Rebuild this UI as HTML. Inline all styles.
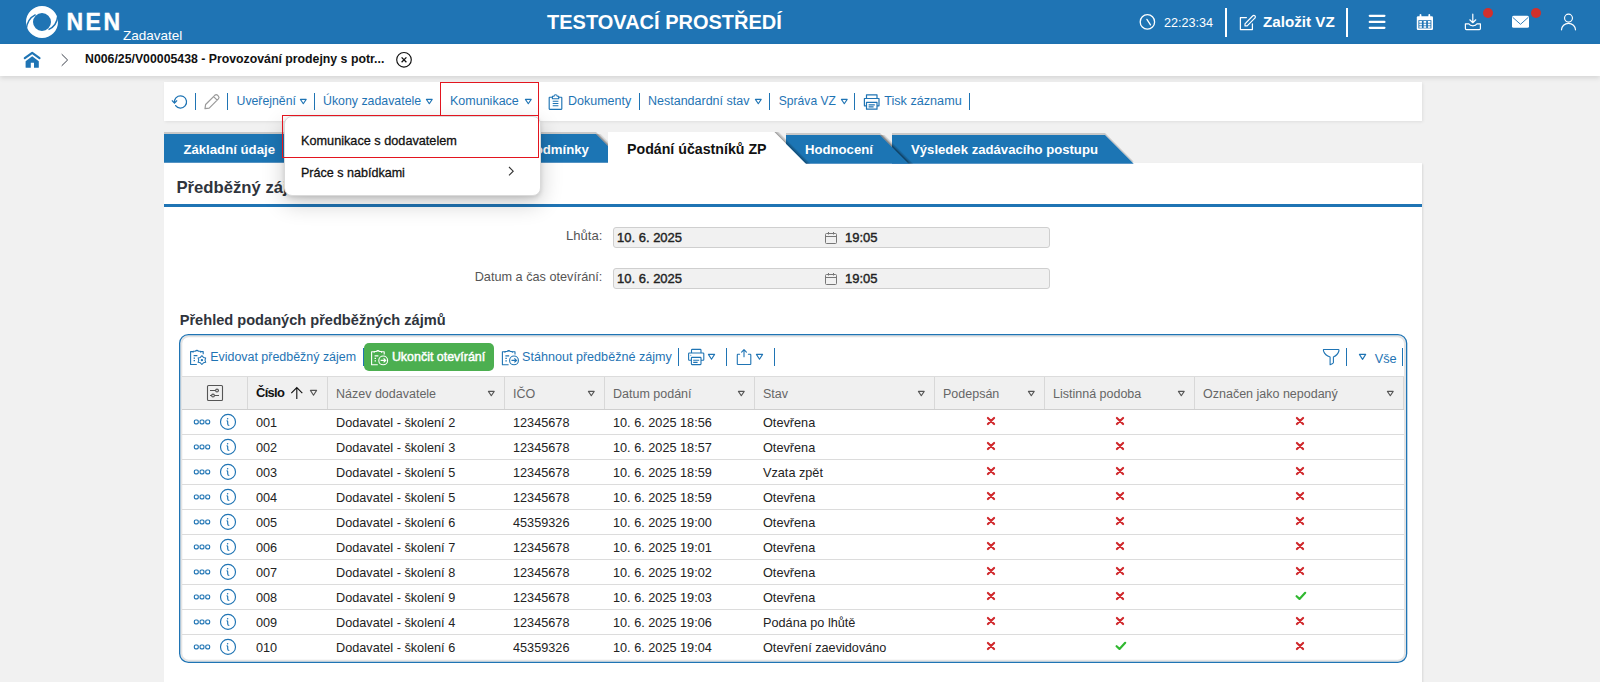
<!DOCTYPE html>
<html><head><meta charset="utf-8">
<style>
*{box-sizing:border-box;margin:0;padding:0}
html,body{width:1600px;height:682px;overflow:hidden;background:#f1f1f1;font-family:"Liberation Sans",sans-serif;color:#222}
.a{position:absolute}
.t{position:absolute;line-height:1;white-space:nowrap}
#hdr{left:0;top:0;width:1600px;height:44px;background:#1f74b4}
#bc{left:0;top:44px;width:1600px;height:32px;background:#fff;box-shadow:0 2px 5px rgba(0,0,0,.12)}
#tb{left:164px;top:82px;width:1258px;height:39px;background:#fff;box-shadow:1px 1px 3px rgba(0,0,0,.08)}
#cp{left:164px;top:163px;width:1258px;height:530px;background:#fff;box-shadow:2px 0 2px -1px rgba(0,0,0,.1)}
.w{color:#fff}
.lk{color:#1f74b4}
.sep{position:absolute;width:2px;background:#1f74b4}
</style></head><body>
<!-- header -->
<div id="hdr" class="a"></div>
<svg class="a" style="left:22px;top:2px" width="40" height="40" viewBox="0 0 40 40">
  <circle cx="20" cy="20" r="12.5" fill="none" stroke="#fff" stroke-width="7"/>
  <path d="M4.2 27.4 Q5.2 16.8 13.6 12.6" fill="none" stroke="#1f74b4" stroke-width="1.5"/>
  <path d="M35.9 13.4 Q34.8 24.2 26.5 27.6" fill="none" stroke="#1f74b4" stroke-width="1.5"/>
</svg>
<div class="t w" style="left:66.5px;top:11.3px;font-size:23px;font-weight:bold;letter-spacing:2.5px;-webkit-text-stroke:0.4px #fff">NEN</div>
<div class="t w" style="left:123px;top:29px;font-size:13.5px">Zadavatel</div>
<div class="t w" style="left:547px;top:11.5px;font-size:20px;font-weight:bold;letter-spacing:0px">TESTOVACÍ PROSTŘEDÍ</div>

<div class="t w" style="left:1164px;top:16.5px;font-size:12.6px">22:23:34</div>
<div class="a" style="left:1225px;top:8px;width:2px;height:29px;background:#fff"></div>
<div class="t w" style="left:1263px;top:14.3px;font-size:15.2px;font-weight:bold">Založit VZ</div>
<div class="a" style="left:1346px;top:8px;width:2px;height:29px;background:#fff"></div>


<svg class="a" style="left:1130px;top:5px" width="460" height="36" viewBox="1130 5 460 36">
 <g fill="none" stroke="#fff" stroke-width="1.6" stroke-linecap="round" stroke-linejoin="round">
  <circle cx="1147.4" cy="21.9" r="7.2" stroke-width="1.3"/>
  <path d="M1146.9 19.4 L1150.5 24.9" stroke-width="1.3"/>
  <path d="M1246.4 17.5 H1240.4 V29.6 H1252.4 V23.8" stroke-width="1.25"/>
  <path d="M1245 23.8 L1252.6 16 Q1253.8 14.8 1255 15.9 Q1256 17.1 1254.8 18.2 L1247.2 25.8 L1245 25.9 Z" stroke-width="1.2"/>
  <path d="M1369.8 15.8 H1384.4 M1369.8 21.9 H1384.4 M1369.8 27.8 H1384.4" stroke-width="2.3"/>
  <path d="M1472.8 14.2 V22.6 M1469.8 19.8 L1472.8 22.7 L1475.8 19.8" stroke-width="1.2"/>
  <path d="M1465.4 23.8 V28.6 Q1465.4 29.6 1466.4 29.6 H1479.4 Q1480.4 29.6 1480.4 28.6 V23.8 H1477 Q1475.8 25.9 1472.9 25.9 Q1470 25.9 1468.8 23.8 Z" stroke-width="1.2"/>
  <circle cx="1568.5" cy="18.1" r="3.95" stroke-width="1.15"/>
  <path d="M1561.5 29.8 A7 6.5 0 0 1 1575.5 29.8" stroke-width="1.2"/>
 </g>
 <g fill="#fff">
  <rect x="1416.8" y="16.3" width="16.2" height="13.6" rx="1.2"/>
  <rect x="1419.6" y="14" width="1.8" height="4" rx=".9"/>
  <rect x="1428.4" y="14" width="1.8" height="4" rx=".9"/>
  <rect x="1512" y="15.8" width="17" height="12" rx="1.6"/>
 </g>
 <g fill="#1f74b4">
  <rect x="1418.4" y="20.2" width="13" height="8.2"/>
 </g>
 <g fill="#fff">
  <rect x="1419.3" y="21" width="2.6" height="1.8"/><rect x="1423.6" y="21" width="2.6" height="1.8"/><rect x="1427.9" y="21" width="2.6" height="1.8"/>
  <rect x="1419.3" y="23.6" width="2.6" height="1.8"/><rect x="1423.6" y="23.6" width="2.6" height="1.8"/><rect x="1427.9" y="23.6" width="2.6" height="1.8"/>
  <rect x="1419.3" y="26.2" width="2.6" height="1.6"/><rect x="1423.6" y="26.2" width="2.6" height="1.6"/><rect x="1427.9" y="26.2" width="2.6" height="1.6"/>
 </g>
 <path d="M1512.7 17.3 L1520.5 24.3 L1528.3 17.3" fill="none" stroke="#1f74b4" stroke-width="0.9"/>
 <circle cx="1488" cy="13" r="5" fill="#d2302c"/>
 <circle cx="1536" cy="13" r="5" fill="#d2302c"/>
</svg>

<!-- breadcrumb -->
<div id="bc" class="a"></div>
<div class="t" style="left:85px;top:53px;font-size:12.3px;font-weight:bold;color:#111">N006/25/V00005438 - Provozování prodejny s potr...</div>

<svg class="a" style="left:20px;top:48px" width="400" height="24" viewBox="20 48 400 24">
  <path d="M24.8 58.2 L32.2 52.8 L39.5 58.2" fill="none" stroke="#1f74b4" stroke-width="2.2" stroke-linecap="round" stroke-linejoin="round"/>
  <path d="M25.6 61.3 L32.2 56.3 L38.8 61.3 V67.3 Q38.8 67.8 38.3 67.8 H34 V62.8 H30.8 V67.8 H26.1 Q25.6 67.8 25.6 67.3 Z" fill="#1f74b4"/>
  <path d="M61.7 54.2 L67.6 60 L61.7 65.8" fill="none" stroke="#3a3f4a" stroke-width="1"/>
  <circle cx="404" cy="59.8" r="7.3" fill="none" stroke="#111" stroke-width="1.15"/>
  <path d="M401.6 57.4 L406.4 62.2 M406.4 57.4 L401.6 62.2" stroke="#111" stroke-width="1.3"/>
</svg>

<!-- toolbar -->
<div id="tb" class="a"></div>

<!-- content panel -->
<div id="cp" class="a"></div>

<!-- P2 -->
<svg class="a" style="left:170px;top:92px" width="400" height="20" viewBox="170 92 400 20"><path d="M175.6 105.6 A6.1 6.1 0 1 0 174.6 100.2 L174.5 102.6" fill="none" stroke="#1f74b4" stroke-width="1.25" stroke-linecap="round"/><path d="M172.3 100.8 L174.5 103.1 L176.7 100.8" fill="none" stroke="#1f74b4" stroke-width="1.25" stroke-linecap="round" stroke-linejoin="round"/><path d="M205 108.6 L205.6 104.5 L214.8 95.3 Q216.2 94 217.6 95.3 L218.4 96.1 Q219.7 97.5 218.4 98.9 L209.2 108.1 Z M213.6 96.6 L217.2 100.2" fill="none" stroke="#9a9a9a" stroke-width="1.2" stroke-linejoin="round"/><path d="M552.2 97.2 H549.7 Q549.2 97.2 549.2 97.7 V108.8 Q549.2 109.3 549.7 109.3 H561.3 Q561.8 109.3 561.8 108.8 V97.7 Q561.8 97.2 561.3 97.2 H558.8" fill="none" stroke="#1f74b4" stroke-width="1.15" stroke-linejoin="round"/><path d="M552.4 98.8 V96.3 H554 A1.6 1.6 0 0 1 557.2 96.3 H558.7 V98.8 Z" fill="none" stroke="#1f74b4" stroke-width="1.1" stroke-linejoin="round"/><path d="M552.7 101.2 H558.4 M552.7 103.5 H558.4 M552.7 105.8 H558.4" stroke="#1f74b4" stroke-width="1.1"/></svg>
<div class="a" style="left:195px;top:93px;width:1.15px;height:16.5px;background:#1f74b4"></div>
<div class="a" style="left:227px;top:93px;width:1.15px;height:16.5px;background:#1f74b4"></div>
<div class="t" style="left:236.5px;top:94.79px;font-size:12.3px;color:#1f74b4">Uveřejnění</div>
<svg class="a" style="left:298.5px;top:97.7px" width="8.6" height="7" viewBox="-1 -1 8.6 7"><path d="M0.4 0.4 H6.199999999999999 L3.3 4.7 Z" fill="none" stroke="#1f74b4" stroke-width="1.1" stroke-linejoin="round"/></svg>
<div class="a" style="left:314px;top:93px;width:1.15px;height:16.5px;background:#1f74b4"></div>
<div class="t" style="left:323px;top:94.75px;font-size:12.35px;color:#1f74b4">Úkony zadavatele</div>
<svg class="a" style="left:425.3px;top:97.7px" width="8.6" height="7" viewBox="-1 -1 8.6 7"><path d="M0.4 0.4 H6.199999999999999 L3.3 4.7 Z" fill="none" stroke="#1f74b4" stroke-width="1.1" stroke-linejoin="round"/></svg>
<div class="t" style="left:450px;top:94.62px;font-size:12.5px;color:#1f74b4">Komunikace</div>
<svg class="a" style="left:523.6px;top:97.7px" width="8.6" height="7" viewBox="-1 -1 8.6 7"><path d="M0.4 0.4 H6.199999999999999 L3.3 4.7 Z" fill="none" stroke="#1f74b4" stroke-width="1.1" stroke-linejoin="round"/></svg>
<div class="t" style="left:568px;top:94.62px;font-size:12.5px;color:#1f74b4">Dokumenty</div>
<div class="a" style="left:639px;top:93px;width:1.15px;height:16.5px;background:#1f74b4"></div>
<div class="t" style="left:648px;top:94.62px;font-size:12.5px;color:#1f74b4">Nestandardní stav</div>
<svg class="a" style="left:754.3px;top:97.7px" width="8.6" height="7" viewBox="-1 -1 8.6 7"><path d="M0.4 0.4 H6.199999999999999 L3.3 4.7 Z" fill="none" stroke="#1f74b4" stroke-width="1.1" stroke-linejoin="round"/></svg>
<div class="a" style="left:769px;top:93px;width:1.15px;height:16.5px;background:#1f74b4"></div>
<div class="t" style="left:778.8px;top:94.96px;font-size:12.1px;color:#1f74b4">Správa VZ</div>
<svg class="a" style="left:839.6px;top:97.7px" width="8.6" height="7" viewBox="-1 -1 8.6 7"><path d="M0.4 0.4 H6.199999999999999 L3.3 4.7 Z" fill="none" stroke="#1f74b4" stroke-width="1.1" stroke-linejoin="round"/></svg>
<div class="a" style="left:854px;top:93px;width:1.15px;height:16.5px;background:#1f74b4"></div>
<svg class="a" style="left:860px;top:92px" width="24" height="20" viewBox="860 92 24 20"><g fill="none" stroke="#1f74b4" stroke-width="1.2" stroke-linejoin="round"><path d="M866.5 98.5 V94.8 H877 V98.5"/><path d="M866.5 105.8 H864.4 V98.5 H879 V105.8 H877"/><path d="M866.5 102.4 H877 V109.2 H866.5 Z"/><path d="M868.6 104.8 H874.8 M868.6 106.9 H873.6"/></g></svg>
<div class="t" style="left:884.2px;top:95.49px;font-size:12.65px;color:#1f74b4">Tisk záznamu</div>
<div class="a" style="left:969px;top:93px;width:1.15px;height:16.5px;background:#1f74b4"></div>
<div class="a" style="left:440px;top:82px;width:99px;height:34.5px;border:1px solid #e3151f;border-bottom:none"></div>
<svg class="a" style="left:160px;top:126px" width="1000" height="46" viewBox="160 126 1000 46"><defs><filter id="shA" x="-5%" y="-40%" width="110%" height="180%"><feDropShadow dx="0" dy="-2" stdDeviation="0.5" flood-color="#000" flood-opacity="0.17"/></filter><linearGradient id="g1" gradientUnits="userSpaceOnUse" x1="790" y1="147.9" x2="792.8" y2="145.1"><stop offset="0" stop-color="#000" stop-opacity="0.38"/><stop offset="1" stop-color="#000" stop-opacity="0"/></linearGradient><linearGradient id="g2" gradientUnits="userSpaceOnUse" x1="894.3" y1="149.3" x2="897.1" y2="146.5"><stop offset="0" stop-color="#000" stop-opacity="0.38"/><stop offset="1" stop-color="#000" stop-opacity="0"/></linearGradient><linearGradient id="g0" gradientUnits="userSpaceOnUse" x1="602" y1="140" x2="604.8" y2="137.2"><stop offset="0" stop-color="#000" stop-opacity="0.3"/><stop offset="1" stop-color="#000" stop-opacity="0"/></linearGradient></defs><g filter="url(#shA)"><polygon points="892,135 1105,135 1133.7,163.7 892,163.7" fill="#1f74b4"/></g><g filter="url(#shA)"><polygon points="786,135 880,135 908.7,163.7 786,163.7" fill="#1f74b4"/></g><polygon points="880,135 908.7,163.7 913.7,163.7 885,135" fill="url(#g2)"/><g filter="url(#shA)"><polygon points="440,134 596,134 624.8,162.8 440,162.8" fill="#1f74b4"/></g><polygon points="596,134 608,146 608,141 601,134" fill="url(#g0)"/><g filter="url(#shA)"><polygon points="164,134 420,134 448.8,162.8 164,162.8" fill="#1f74b4"/></g><polygon points="774.2,132.1 805.8,163.7 810.8,163.7 779.2,132.1" fill="url(#g1)"/><polygon points="608,132.1 774.2,132.1 811.8,169.7 608,169.7" fill="#fff"/></svg>
<div class="a" style="left:164px;top:164px;width:1258px;height:8px;background:#fff"></div>
<div class="t" style="left:183.4px;top:142.63px;font-size:13.2px;font-weight:bold;color:#fff">Základní údaje</div>
<div class="t" style="left:466.5px;top:142.53px;font-size:13.2px;font-weight:bold;color:#fff">Zadávací podmínky</div>
<div class="t" style="left:627px;top:141.78px;font-size:14.2px;font-weight:bold;color:#111">Podání účastníků ZP</div>
<div class="t" style="left:805px;top:143.47px;font-size:13.15px;font-weight:bold;color:#fff">Hodnocení</div>
<div class="t" style="left:911px;top:143.47px;font-size:13.15px;font-weight:bold;color:#fff">Výsledek zadávacího postupu</div>
<div class="t" style="left:176.4px;top:179.66px;font-size:16.7px;font-weight:bold;color:#2f343c">Předběžný zájem</div>
<div class="a" style="left:164px;top:204px;width:1258px;height:3px;background:#1f74b4"></div>
<div class="t" style="right:997.7px;top:228.81px;font-size:13.1px;color:#555">Lhůta:</div>
<div class="t" style="right:997.7px;top:271.15px;font-size:12.7px;color:#555">Datum a čas otevírání:</div>
<div class="a" style="left:612.5px;top:227px;width:437px;height:20.8px;background:#f1f1f1;border:1px solid #cfcfcf;border-radius:3px"></div>
<div class="t" style="left:617px;top:231.00px;font-size:13px;color:#222;-webkit-text-stroke:0.4px #222">10. 6. 2025</div>
<div class="t" style="left:845px;top:231.00px;font-size:13px;color:#222;-webkit-text-stroke:0.4px #222">19:05</div>
<svg class="a" style="left:824px;top:230.5px" width="14" height="14" viewBox="0 0 14 14"><g fill="none" stroke="#777" stroke-width="1"><rect x="1.5" y="2.5" width="11" height="10" rx="1"/><path d="M1.5 5.5 H12.5 M4.5 1 V3.5 M9.5 1 V3.5"/></g></svg>
<div class="a" style="left:612.5px;top:268px;width:437px;height:20.5px;background:#f1f1f1;border:1px solid #cfcfcf;border-radius:3px"></div>
<div class="t" style="left:617px;top:272.00px;font-size:13px;color:#222;-webkit-text-stroke:0.4px #222">10. 6. 2025</div>
<div class="t" style="left:845px;top:272.00px;font-size:13px;color:#222;-webkit-text-stroke:0.4px #222">19:05</div>
<svg class="a" style="left:824px;top:271.5px" width="14" height="14" viewBox="0 0 14 14"><g fill="none" stroke="#777" stroke-width="1"><rect x="1.5" y="2.5" width="11" height="10" rx="1"/><path d="M1.5 5.5 H12.5 M4.5 1 V3.5 M9.5 1 V3.5"/></g></svg>
<div class="t" style="left:179.7px;top:312.64px;font-size:14.6px;font-weight:bold;color:#2f343c">Přehled podaných předběžných zájmů</div>
<!-- /P2 -->
<!-- P3 -->
<svg class="a" style="left:170px;top:325px" width="1250" height="345" viewBox="170 325 1250 345"><rect x="181.3" y="336.2" width="1223.7" height="324.5" rx="7.5" fill="none" stroke="#e4e4e4" stroke-width="2"/><rect x="179.65" y="334.55" width="1227" height="327.8" rx="8.8" fill="none" stroke="#1f74b4" stroke-width="1.3"/></svg>
<svg class="a" style="left:180px;top:340px;z-index:2" width="600" height="30" viewBox="180 340 600 30"><path d="M193.2 351.6 H190.6 V364.5 H196.79999999999998 M200.5 351.6 H203.2 V354.20000000000005" fill="none" stroke="#1f74b4" stroke-width="1.1" stroke-linejoin="round"/><path d="M193.2 352.6 V351.3 H195.29999999999998 A1.9 1.9 0 0 1 198.5 351.3 H200.5 V352.6" fill="none" stroke="#1f74b4" stroke-width="1.1" stroke-linejoin="round"/><circle cx="196.9" cy="350.70000000000005" r="0.55" fill="#1f74b4"/><path d="M193.6 355.6 H197.4 M193.6 358.20000000000005 H195.0 M193.6 360.70000000000005 H195.0" stroke="#1f74b4" stroke-width="1.2"/><polygon points="201.90,364.50 200.35,362.78 198.09,362.30 198.80,360.10 198.09,357.90 200.35,357.42 201.90,355.70 203.45,357.42 205.71,357.90 205.00,360.10 205.71,362.30 203.45,362.78" fill="#fff" stroke="#1f74b4" stroke-width="1.05" stroke-linejoin="round"/><circle cx="201.9" cy="360.1" r="1.2" fill="#1f74b4"/><path d="M374.20000000000005 351.8 H371.6 V364.7 H377.8 M381.5 351.8 H384.20000000000005 V354.40000000000003" fill="none" stroke="#fff" stroke-width="1.1" stroke-linejoin="round"/><path d="M374.20000000000005 352.8 V351.5 H376.3 A1.9 1.9 0 0 1 379.5 351.5 H381.5 V352.8" fill="none" stroke="#fff" stroke-width="1.1" stroke-linejoin="round"/><circle cx="377.90000000000003" cy="350.90000000000003" r="0.55" fill="#fff"/><path d="M374.6 355.8 H378.40000000000003 M374.6 358.40000000000003 H376.0 M374.6 360.90000000000003 H376.0" stroke="#fff" stroke-width="1.2"/><circle cx="383.2" cy="360.4" r="4.4" fill="#4caf50" stroke="#fff" stroke-width="1.1"/><path d="M380.59999999999997 360.4 H385.59999999999997 M383.59999999999997 358.4 L385.7 360.4 L383.59999999999997 362.4" fill="none" stroke="#fff" stroke-width="1.2"/><path d="M505.0 351.8 H502.4 V364.7 H508.59999999999997 M512.3 351.8 H515.0 V354.40000000000003" fill="none" stroke="#1f74b4" stroke-width="1.1" stroke-linejoin="round"/><path d="M505.0 352.8 V351.5 H507.09999999999997 A1.9 1.9 0 0 1 510.29999999999995 351.5 H512.3 V352.8" fill="none" stroke="#1f74b4" stroke-width="1.1" stroke-linejoin="round"/><circle cx="508.7" cy="350.90000000000003" r="0.55" fill="#1f74b4"/><path d="M505.4 355.8 H509.2 M505.4 358.40000000000003 H506.79999999999995 M505.4 360.90000000000003 H506.79999999999995" stroke="#1f74b4" stroke-width="1.2"/><circle cx="514" cy="360.4" r="4.4" fill="#fff" stroke="#1f74b4" stroke-width="1.1"/><path d="M511.4 360.4 H516.4 M514.4 358.4 L516.5 360.4 L514.4 362.4" fill="none" stroke="#1f74b4" stroke-width="1.2"/><g fill="none" stroke="#1f74b4" stroke-width="1.1" stroke-linejoin="round"><path d="M691.5 353 V350.2 Q691.5 349.4 692.3 349.4 H700.2 Q701 349.4 701 350.2 V353"/><path d="M691.4 360.3 H689.2 Q688.6 360.3 688.6 359.6 V353.8 Q688.6 353 689.4 353 H703 Q703.8 353 703.8 353.8 V359.6 Q703.8 360.3 703.1 360.3 H701"/><rect x="691.4" y="357.4" width="9.6" height="7.2" rx="0.6"/></g><path d="M693.2 360.2 H699.2 M693.2 362.4 H697.6" stroke="#1f74b4" stroke-width="1.1"/><circle cx="690.8" cy="355.3" r="0.5" fill="#1f74b4"/><g fill="none" stroke="#1f74b4" stroke-width="1.1" stroke-linejoin="round" stroke-linecap="round"><path d="M739.6 354.3 H737.8 Q737.3 354.3 737.3 354.9 V363.9 Q737.3 364.5 737.9 364.5 H750.2 Q750.8 364.5 750.8 363.9 V354.9 Q750.8 354.3 750.2 354.3 H748.4"/><path d="M744 356.8 V349.8 M741.6 352.2 L744 349.6 L746.4 352.2"/></g></svg>
<div class="t" style="left:210.2px;top:350.66px;font-size:12.45px;color:#1f74b4">Evidovat předběžný zájem</div>
<div class="a" style="left:363px;top:348px;width:1.15px;height:18px;background:#1f74b4"></div>
<div class="a" style="left:363.7px;top:343px;width:130.3px;height:28px;background:#4caf50;border-radius:5px"></div>
<div class="t" style="left:391.9px;top:350.66px;font-size:12.45px;color:#fff;-webkit-text-stroke:0.45px #fff">Ukončit otevírání</div>
<div class="t" style="left:522px;top:350.53px;font-size:12.6px;color:#1f74b4">Stáhnout předběžné zájmy</div>
<div class="a" style="left:678px;top:348px;width:1.15px;height:18px;background:#1f74b4"></div>
<svg class="a" style="left:707.4px;top:353.2px" width="9" height="7.6" viewBox="-1 -1 9 7.6"><path d="M0.4 0.4 H6.6 L3.5 5.3 Z" fill="none" stroke="#1f74b4" stroke-width="1.1" stroke-linejoin="round"/></svg>
<div class="a" style="left:726px;top:348px;width:1.15px;height:18px;background:#1f74b4"></div>
<svg class="a" style="left:755px;top:353.2px" width="9" height="7.6" viewBox="-1 -1 9 7.6"><path d="M0.4 0.4 H6.6 L3.5 5.3 Z" fill="none" stroke="#1f74b4" stroke-width="1.1" stroke-linejoin="round"/></svg>
<div class="a" style="left:774px;top:348px;width:1.15px;height:18px;background:#1f74b4"></div>
<svg class="a" style="left:1320px;top:347px" width="22" height="20" viewBox="1320 347 22 20"><path d="M1323.6 349.5 H1338.4 Q1339.2 349.6 1338.9 351 Q1337.8 355.2 1333.4 356.9 V362.8 Q1333.3 363.6 1330.1 364.7 V357 Q1325 355.2 1323.6 351.2 Q1323.2 349.6 1323.6 349.5 Z" fill="none" stroke="#1f74b4" stroke-width="1.1" stroke-linejoin="round"/></svg>
<div class="a" style="left:1346px;top:348px;width:1.15px;height:18px;background:#1f74b4"></div>
<svg class="a" style="left:1358.2px;top:353.2px" width="9.1" height="7.7" viewBox="-1 -1 9.1 7.7"><path d="M0.4 0.4 H6.699999999999999 L3.55 5.4 Z" fill="none" stroke="#1f74b4" stroke-width="1.1" stroke-linejoin="round"/></svg>
<div class="t" style="left:1374.7px;top:353.01px;font-size:12.75px;color:#1f74b4">Vše</div>
<div class="a" style="left:1402px;top:348px;width:1.15px;height:18px;background:#1f74b4"></div>
<div class="a" style="left:181.8px;top:376px;width:1222.2px;height:34px;background:#f0f0f0;border-top:1px solid #dcdcdc;border-bottom:1px solid #cfcfcf"></div>
<div class="a" style="left:247.0px;top:377px;width:1px;height:32px;background:#d8d8d8"></div>
<div class="a" style="left:327.0px;top:377px;width:1px;height:32px;background:#d8d8d8"></div>
<div class="a" style="left:504.1px;top:377px;width:1px;height:32px;background:#d8d8d8"></div>
<div class="a" style="left:603.9px;top:377px;width:1px;height:32px;background:#d8d8d8"></div>
<div class="a" style="left:753.5px;top:377px;width:1px;height:32px;background:#d8d8d8"></div>
<div class="a" style="left:933.7px;top:377px;width:1px;height:32px;background:#d8d8d8"></div>
<div class="a" style="left:1043.8px;top:377px;width:1px;height:32px;background:#d8d8d8"></div>
<div class="a" style="left:1194.2px;top:377px;width:1px;height:32px;background:#d8d8d8"></div>
<div class="a" style="left:1403.3px;top:377px;width:1px;height:32px;background:#d8d8d8"></div>
<svg class="a" style="left:206px;top:384px" width="18" height="18" viewBox="0 0 18 18"><g fill="none" stroke="#555" stroke-width="1.1"><rect x="1.5" y="1.5" width="15" height="15" rx="1"/><path d="M4 6.5 H13 M4 11.5 H13"/><circle cx="11" cy="6.5" r="1.4" fill="#f0f0f0"/><circle cx="7" cy="11.5" r="1.4" fill="#f0f0f0"/></g></svg>
<div class="t" style="left:256px;top:387.08px;font-size:12.9px;font-weight:bold;color:#111;letter-spacing:-0.65px">Číslo</div>
<svg class="a" style="left:290px;top:386px" width="14" height="14" viewBox="0 0 14 14"><path d="M6.8 13 V1.6 M1.3 7.1 L6.8 1.6 L12.3 7.1" fill="none" stroke="#111" stroke-width="1.1"/></svg>
<svg class="a" style="left:309.3px;top:389.1px" width="9" height="7.5" viewBox="-1 -1 9 7.5"><path d="M0.4 0.4 H6.6 L3.5 5.2 Z" fill="none" stroke="#555" stroke-width="1.1" stroke-linejoin="round"/></svg>
<div class="t" style="left:336px;top:387.82px;font-size:12.5px;color:#666">Název dodavatele</div>
<svg class="a" style="left:486.8px;top:389.6px" width="8.6" height="7" viewBox="-1 -1 8.6 7"><path d="M0.4 0.4 H6.199999999999999 L3.3 4.7 Z" fill="none" stroke="#555" stroke-width="1.1" stroke-linejoin="round"/></svg>
<div class="t" style="left:513px;top:387.82px;font-size:12.5px;color:#666">IČO</div>
<svg class="a" style="left:586.8px;top:389.6px" width="8.6" height="7" viewBox="-1 -1 8.6 7"><path d="M0.4 0.4 H6.199999999999999 L3.3 4.7 Z" fill="none" stroke="#555" stroke-width="1.1" stroke-linejoin="round"/></svg>
<div class="t" style="left:613px;top:387.82px;font-size:12.5px;color:#666">Datum podání</div>
<svg class="a" style="left:736.8px;top:389.6px" width="8.6" height="7" viewBox="-1 -1 8.6 7"><path d="M0.4 0.4 H6.199999999999999 L3.3 4.7 Z" fill="none" stroke="#555" stroke-width="1.1" stroke-linejoin="round"/></svg>
<div class="t" style="left:763px;top:387.82px;font-size:12.5px;color:#666">Stav</div>
<svg class="a" style="left:916.8px;top:389.6px" width="8.6" height="7" viewBox="-1 -1 8.6 7"><path d="M0.4 0.4 H6.199999999999999 L3.3 4.7 Z" fill="none" stroke="#555" stroke-width="1.1" stroke-linejoin="round"/></svg>
<div class="t" style="left:943px;top:387.82px;font-size:12.5px;color:#666">Podepsán</div>
<svg class="a" style="left:1026.8px;top:389.6px" width="8.6" height="7" viewBox="-1 -1 8.6 7"><path d="M0.4 0.4 H6.199999999999999 L3.3 4.7 Z" fill="none" stroke="#555" stroke-width="1.1" stroke-linejoin="round"/></svg>
<div class="t" style="left:1053px;top:387.82px;font-size:12.5px;color:#666">Listinná podoba</div>
<svg class="a" style="left:1176.8px;top:389.6px" width="8.6" height="7" viewBox="-1 -1 8.6 7"><path d="M0.4 0.4 H6.199999999999999 L3.3 4.7 Z" fill="none" stroke="#555" stroke-width="1.1" stroke-linejoin="round"/></svg>
<div class="t" style="left:1203px;top:387.82px;font-size:12.5px;color:#666">Označen jako nepodaný</div>
<svg class="a" style="left:1385.8px;top:389.6px" width="8.6" height="7" viewBox="-1 -1 8.6 7"><path d="M0.4 0.4 H6.199999999999999 L3.3 4.7 Z" fill="none" stroke="#555" stroke-width="1.1" stroke-linejoin="round"/></svg>
<div class="a" style="left:181.8px;top:433.5px;width:1222.2px;height:1px;background:#dcdcdc"></div>
<svg class="a" style="left:192px;top:413px" width="48" height="18" viewBox="192 413 48 18"><g fill="none" stroke="#1f74b4" stroke-width="1.15"><rect x="194.35" y="419.95000000000005" width="3.9" height="3.9" rx="1.3"/><rect x="200.05" y="419.95000000000005" width="3.9" height="3.9" rx="1.3"/><rect x="205.75" y="419.95000000000005" width="3.9" height="3.9" rx="1.3"/><circle cx="228" cy="421.90000000000003" r="7.5"/></g><circle cx="227.6" cy="418.70000000000005" r="0.75" fill="#1f74b4"/><path d="M226.6 420.90000000000003 Q227.7 420.70000000000005 227.7 421.90000000000003 V423.90000000000003 Q227.7 425.3 229.3 425.5" stroke="#1f74b4" stroke-width="1.15" fill="none"/></svg><div class="t" style="left:256px;top:416.75px;font-size:12.7px;">001</div>
<div class="t" style="left:336px;top:416.75px;font-size:12.7px;">Dodavatel - školení 2</div>
<div class="t" style="left:513px;top:416.75px;font-size:12.7px;">12345678</div>
<div class="t" style="left:613px;top:416.75px;font-size:12.7px;">10. 6. 2025 18:56</div>
<div class="t" style="left:763px;top:416.75px;font-size:12.7px;">Otevřena</div>
<svg class="a" style="left:984.6px;top:414.9px" width="12" height="12" viewBox="0 0 12 12"><path d="M2.9 2.9 L9.1 9.1 M9.1 2.9 L2.9 9.1" stroke="#d0282c" stroke-width="2.1" stroke-linecap="round"/></svg>
<svg class="a" style="left:1114.4px;top:414.9px" width="12" height="12" viewBox="0 0 12 12"><path d="M2.9 2.9 L9.1 9.1 M9.1 2.9 L2.9 9.1" stroke="#d0282c" stroke-width="2.1" stroke-linecap="round"/></svg>
<svg class="a" style="left:1294.1px;top:414.9px" width="12" height="12" viewBox="0 0 12 12"><path d="M2.9 2.9 L9.1 9.1 M9.1 2.9 L2.9 9.1" stroke="#d0282c" stroke-width="2.1" stroke-linecap="round"/></svg>
<div class="a" style="left:181.8px;top:458.5px;width:1222.2px;height:1px;background:#dcdcdc"></div>
<svg class="a" style="left:192px;top:438px" width="48" height="18" viewBox="192 438 48 18"><g fill="none" stroke="#1f74b4" stroke-width="1.15"><rect x="194.35" y="444.95000000000005" width="3.9" height="3.9" rx="1.3"/><rect x="200.05" y="444.95000000000005" width="3.9" height="3.9" rx="1.3"/><rect x="205.75" y="444.95000000000005" width="3.9" height="3.9" rx="1.3"/><circle cx="228" cy="446.90000000000003" r="7.5"/></g><circle cx="227.6" cy="443.70000000000005" r="0.75" fill="#1f74b4"/><path d="M226.6 445.90000000000003 Q227.7 445.70000000000005 227.7 446.90000000000003 V448.90000000000003 Q227.7 450.3 229.3 450.5" stroke="#1f74b4" stroke-width="1.15" fill="none"/></svg><div class="t" style="left:256px;top:441.75px;font-size:12.7px;">002</div>
<div class="t" style="left:336px;top:441.75px;font-size:12.7px;">Dodavatel - školení 3</div>
<div class="t" style="left:513px;top:441.75px;font-size:12.7px;">12345678</div>
<div class="t" style="left:613px;top:441.75px;font-size:12.7px;">10. 6. 2025 18:57</div>
<div class="t" style="left:763px;top:441.75px;font-size:12.7px;">Otevřena</div>
<svg class="a" style="left:984.6px;top:439.9px" width="12" height="12" viewBox="0 0 12 12"><path d="M2.9 2.9 L9.1 9.1 M9.1 2.9 L2.9 9.1" stroke="#d0282c" stroke-width="2.1" stroke-linecap="round"/></svg>
<svg class="a" style="left:1114.4px;top:439.9px" width="12" height="12" viewBox="0 0 12 12"><path d="M2.9 2.9 L9.1 9.1 M9.1 2.9 L2.9 9.1" stroke="#d0282c" stroke-width="2.1" stroke-linecap="round"/></svg>
<svg class="a" style="left:1294.1px;top:439.9px" width="12" height="12" viewBox="0 0 12 12"><path d="M2.9 2.9 L9.1 9.1 M9.1 2.9 L2.9 9.1" stroke="#d0282c" stroke-width="2.1" stroke-linecap="round"/></svg>
<div class="a" style="left:181.8px;top:483.5px;width:1222.2px;height:1px;background:#dcdcdc"></div>
<svg class="a" style="left:192px;top:463px" width="48" height="18" viewBox="192 463 48 18"><g fill="none" stroke="#1f74b4" stroke-width="1.15"><rect x="194.35" y="469.95000000000005" width="3.9" height="3.9" rx="1.3"/><rect x="200.05" y="469.95000000000005" width="3.9" height="3.9" rx="1.3"/><rect x="205.75" y="469.95000000000005" width="3.9" height="3.9" rx="1.3"/><circle cx="228" cy="471.90000000000003" r="7.5"/></g><circle cx="227.6" cy="468.70000000000005" r="0.75" fill="#1f74b4"/><path d="M226.6 470.90000000000003 Q227.7 470.70000000000005 227.7 471.90000000000003 V473.90000000000003 Q227.7 475.3 229.3 475.5" stroke="#1f74b4" stroke-width="1.15" fill="none"/></svg><div class="t" style="left:256px;top:466.75px;font-size:12.7px;">003</div>
<div class="t" style="left:336px;top:466.75px;font-size:12.7px;">Dodavatel - školení 5</div>
<div class="t" style="left:513px;top:466.75px;font-size:12.7px;">12345678</div>
<div class="t" style="left:613px;top:466.75px;font-size:12.7px;">10. 6. 2025 18:59</div>
<div class="t" style="left:763px;top:466.75px;font-size:12.7px;">Vzata zpět</div>
<svg class="a" style="left:984.6px;top:464.9px" width="12" height="12" viewBox="0 0 12 12"><path d="M2.9 2.9 L9.1 9.1 M9.1 2.9 L2.9 9.1" stroke="#d0282c" stroke-width="2.1" stroke-linecap="round"/></svg>
<svg class="a" style="left:1114.4px;top:464.9px" width="12" height="12" viewBox="0 0 12 12"><path d="M2.9 2.9 L9.1 9.1 M9.1 2.9 L2.9 9.1" stroke="#d0282c" stroke-width="2.1" stroke-linecap="round"/></svg>
<svg class="a" style="left:1294.1px;top:464.9px" width="12" height="12" viewBox="0 0 12 12"><path d="M2.9 2.9 L9.1 9.1 M9.1 2.9 L2.9 9.1" stroke="#d0282c" stroke-width="2.1" stroke-linecap="round"/></svg>
<div class="a" style="left:181.8px;top:508.5px;width:1222.2px;height:1px;background:#dcdcdc"></div>
<svg class="a" style="left:192px;top:488px" width="48" height="18" viewBox="192 488 48 18"><g fill="none" stroke="#1f74b4" stroke-width="1.15"><rect x="194.35" y="494.95000000000005" width="3.9" height="3.9" rx="1.3"/><rect x="200.05" y="494.95000000000005" width="3.9" height="3.9" rx="1.3"/><rect x="205.75" y="494.95000000000005" width="3.9" height="3.9" rx="1.3"/><circle cx="228" cy="496.90000000000003" r="7.5"/></g><circle cx="227.6" cy="493.70000000000005" r="0.75" fill="#1f74b4"/><path d="M226.6 495.90000000000003 Q227.7 495.70000000000005 227.7 496.90000000000003 V498.90000000000003 Q227.7 500.3 229.3 500.5" stroke="#1f74b4" stroke-width="1.15" fill="none"/></svg><div class="t" style="left:256px;top:491.75px;font-size:12.7px;">004</div>
<div class="t" style="left:336px;top:491.75px;font-size:12.7px;">Dodavatel - školení 5</div>
<div class="t" style="left:513px;top:491.75px;font-size:12.7px;">12345678</div>
<div class="t" style="left:613px;top:491.75px;font-size:12.7px;">10. 6. 2025 18:59</div>
<div class="t" style="left:763px;top:491.75px;font-size:12.7px;">Otevřena</div>
<svg class="a" style="left:984.6px;top:489.9px" width="12" height="12" viewBox="0 0 12 12"><path d="M2.9 2.9 L9.1 9.1 M9.1 2.9 L2.9 9.1" stroke="#d0282c" stroke-width="2.1" stroke-linecap="round"/></svg>
<svg class="a" style="left:1114.4px;top:489.9px" width="12" height="12" viewBox="0 0 12 12"><path d="M2.9 2.9 L9.1 9.1 M9.1 2.9 L2.9 9.1" stroke="#d0282c" stroke-width="2.1" stroke-linecap="round"/></svg>
<svg class="a" style="left:1294.1px;top:489.9px" width="12" height="12" viewBox="0 0 12 12"><path d="M2.9 2.9 L9.1 9.1 M9.1 2.9 L2.9 9.1" stroke="#d0282c" stroke-width="2.1" stroke-linecap="round"/></svg>
<div class="a" style="left:181.8px;top:533.5px;width:1222.2px;height:1px;background:#dcdcdc"></div>
<svg class="a" style="left:192px;top:513px" width="48" height="18" viewBox="192 513 48 18"><g fill="none" stroke="#1f74b4" stroke-width="1.15"><rect x="194.35" y="519.95" width="3.9" height="3.9" rx="1.3"/><rect x="200.05" y="519.95" width="3.9" height="3.9" rx="1.3"/><rect x="205.75" y="519.95" width="3.9" height="3.9" rx="1.3"/><circle cx="228" cy="521.9" r="7.5"/></g><circle cx="227.6" cy="518.7" r="0.75" fill="#1f74b4"/><path d="M226.6 520.9 Q227.7 520.7 227.7 521.9 V523.9 Q227.7 525.3000000000001 229.3 525.5" stroke="#1f74b4" stroke-width="1.15" fill="none"/></svg><div class="t" style="left:256px;top:516.75px;font-size:12.7px;">005</div>
<div class="t" style="left:336px;top:516.75px;font-size:12.7px;">Dodavatel - školení 6</div>
<div class="t" style="left:513px;top:516.75px;font-size:12.7px;">45359326</div>
<div class="t" style="left:613px;top:516.75px;font-size:12.7px;">10. 6. 2025 19:00</div>
<div class="t" style="left:763px;top:516.75px;font-size:12.7px;">Otevřena</div>
<svg class="a" style="left:984.6px;top:514.9px" width="12" height="12" viewBox="0 0 12 12"><path d="M2.9 2.9 L9.1 9.1 M9.1 2.9 L2.9 9.1" stroke="#d0282c" stroke-width="2.1" stroke-linecap="round"/></svg>
<svg class="a" style="left:1114.4px;top:514.9px" width="12" height="12" viewBox="0 0 12 12"><path d="M2.9 2.9 L9.1 9.1 M9.1 2.9 L2.9 9.1" stroke="#d0282c" stroke-width="2.1" stroke-linecap="round"/></svg>
<svg class="a" style="left:1294.1px;top:514.9px" width="12" height="12" viewBox="0 0 12 12"><path d="M2.9 2.9 L9.1 9.1 M9.1 2.9 L2.9 9.1" stroke="#d0282c" stroke-width="2.1" stroke-linecap="round"/></svg>
<div class="a" style="left:181.8px;top:558.5px;width:1222.2px;height:1px;background:#dcdcdc"></div>
<svg class="a" style="left:192px;top:538px" width="48" height="18" viewBox="192 538 48 18"><g fill="none" stroke="#1f74b4" stroke-width="1.15"><rect x="194.35" y="544.95" width="3.9" height="3.9" rx="1.3"/><rect x="200.05" y="544.95" width="3.9" height="3.9" rx="1.3"/><rect x="205.75" y="544.95" width="3.9" height="3.9" rx="1.3"/><circle cx="228" cy="546.9" r="7.5"/></g><circle cx="227.6" cy="543.7" r="0.75" fill="#1f74b4"/><path d="M226.6 545.9 Q227.7 545.7 227.7 546.9 V548.9 Q227.7 550.3000000000001 229.3 550.5" stroke="#1f74b4" stroke-width="1.15" fill="none"/></svg><div class="t" style="left:256px;top:541.75px;font-size:12.7px;">006</div>
<div class="t" style="left:336px;top:541.75px;font-size:12.7px;">Dodavatel - školení 7</div>
<div class="t" style="left:513px;top:541.75px;font-size:12.7px;">12345678</div>
<div class="t" style="left:613px;top:541.75px;font-size:12.7px;">10. 6. 2025 19:01</div>
<div class="t" style="left:763px;top:541.75px;font-size:12.7px;">Otevřena</div>
<svg class="a" style="left:984.6px;top:539.9px" width="12" height="12" viewBox="0 0 12 12"><path d="M2.9 2.9 L9.1 9.1 M9.1 2.9 L2.9 9.1" stroke="#d0282c" stroke-width="2.1" stroke-linecap="round"/></svg>
<svg class="a" style="left:1114.4px;top:539.9px" width="12" height="12" viewBox="0 0 12 12"><path d="M2.9 2.9 L9.1 9.1 M9.1 2.9 L2.9 9.1" stroke="#d0282c" stroke-width="2.1" stroke-linecap="round"/></svg>
<svg class="a" style="left:1294.1px;top:539.9px" width="12" height="12" viewBox="0 0 12 12"><path d="M2.9 2.9 L9.1 9.1 M9.1 2.9 L2.9 9.1" stroke="#d0282c" stroke-width="2.1" stroke-linecap="round"/></svg>
<div class="a" style="left:181.8px;top:583.5px;width:1222.2px;height:1px;background:#dcdcdc"></div>
<svg class="a" style="left:192px;top:563px" width="48" height="18" viewBox="192 563 48 18"><g fill="none" stroke="#1f74b4" stroke-width="1.15"><rect x="194.35" y="569.95" width="3.9" height="3.9" rx="1.3"/><rect x="200.05" y="569.95" width="3.9" height="3.9" rx="1.3"/><rect x="205.75" y="569.95" width="3.9" height="3.9" rx="1.3"/><circle cx="228" cy="571.9" r="7.5"/></g><circle cx="227.6" cy="568.7" r="0.75" fill="#1f74b4"/><path d="M226.6 570.9 Q227.7 570.7 227.7 571.9 V573.9 Q227.7 575.3000000000001 229.3 575.5" stroke="#1f74b4" stroke-width="1.15" fill="none"/></svg><div class="t" style="left:256px;top:566.75px;font-size:12.7px;">007</div>
<div class="t" style="left:336px;top:566.75px;font-size:12.7px;">Dodavatel - školení 8</div>
<div class="t" style="left:513px;top:566.75px;font-size:12.7px;">12345678</div>
<div class="t" style="left:613px;top:566.75px;font-size:12.7px;">10. 6. 2025 19:02</div>
<div class="t" style="left:763px;top:566.75px;font-size:12.7px;">Otevřena</div>
<svg class="a" style="left:984.6px;top:564.9px" width="12" height="12" viewBox="0 0 12 12"><path d="M2.9 2.9 L9.1 9.1 M9.1 2.9 L2.9 9.1" stroke="#d0282c" stroke-width="2.1" stroke-linecap="round"/></svg>
<svg class="a" style="left:1114.4px;top:564.9px" width="12" height="12" viewBox="0 0 12 12"><path d="M2.9 2.9 L9.1 9.1 M9.1 2.9 L2.9 9.1" stroke="#d0282c" stroke-width="2.1" stroke-linecap="round"/></svg>
<svg class="a" style="left:1294.1px;top:564.9px" width="12" height="12" viewBox="0 0 12 12"><path d="M2.9 2.9 L9.1 9.1 M9.1 2.9 L2.9 9.1" stroke="#d0282c" stroke-width="2.1" stroke-linecap="round"/></svg>
<div class="a" style="left:181.8px;top:608.5px;width:1222.2px;height:1px;background:#dcdcdc"></div>
<svg class="a" style="left:192px;top:588px" width="48" height="18" viewBox="192 588 48 18"><g fill="none" stroke="#1f74b4" stroke-width="1.15"><rect x="194.35" y="594.95" width="3.9" height="3.9" rx="1.3"/><rect x="200.05" y="594.95" width="3.9" height="3.9" rx="1.3"/><rect x="205.75" y="594.95" width="3.9" height="3.9" rx="1.3"/><circle cx="228" cy="596.9" r="7.5"/></g><circle cx="227.6" cy="593.7" r="0.75" fill="#1f74b4"/><path d="M226.6 595.9 Q227.7 595.7 227.7 596.9 V598.9 Q227.7 600.3000000000001 229.3 600.5" stroke="#1f74b4" stroke-width="1.15" fill="none"/></svg><div class="t" style="left:256px;top:591.75px;font-size:12.7px;">008</div>
<div class="t" style="left:336px;top:591.75px;font-size:12.7px;">Dodavatel - školení 9</div>
<div class="t" style="left:513px;top:591.75px;font-size:12.7px;">12345678</div>
<div class="t" style="left:613px;top:591.75px;font-size:12.7px;">10. 6. 2025 19:03</div>
<div class="t" style="left:763px;top:591.75px;font-size:12.7px;">Otevřena</div>
<svg class="a" style="left:984.6px;top:589.9px" width="12" height="12" viewBox="0 0 12 12"><path d="M2.9 2.9 L9.1 9.1 M9.1 2.9 L2.9 9.1" stroke="#d0282c" stroke-width="2.1" stroke-linecap="round"/></svg>
<svg class="a" style="left:1114.4px;top:589.9px" width="12" height="12" viewBox="0 0 12 12"><path d="M2.9 2.9 L9.1 9.1 M9.1 2.9 L2.9 9.1" stroke="#d0282c" stroke-width="2.1" stroke-linecap="round"/></svg>
<svg class="a" style="left:1294.1px;top:589.9px" width="14" height="13" viewBox="0 0 14 13"><path d="M2.6 6.2 L5.5 8.9 L11.2 2.8" fill="none" stroke="#30b830" stroke-width="2.2" stroke-linecap="round" stroke-linejoin="round"/></svg>
<div class="a" style="left:181.8px;top:633.5px;width:1222.2px;height:1px;background:#dcdcdc"></div>
<svg class="a" style="left:192px;top:613px" width="48" height="18" viewBox="192 613 48 18"><g fill="none" stroke="#1f74b4" stroke-width="1.15"><rect x="194.35" y="619.95" width="3.9" height="3.9" rx="1.3"/><rect x="200.05" y="619.95" width="3.9" height="3.9" rx="1.3"/><rect x="205.75" y="619.95" width="3.9" height="3.9" rx="1.3"/><circle cx="228" cy="621.9" r="7.5"/></g><circle cx="227.6" cy="618.7" r="0.75" fill="#1f74b4"/><path d="M226.6 620.9 Q227.7 620.7 227.7 621.9 V623.9 Q227.7 625.3000000000001 229.3 625.5" stroke="#1f74b4" stroke-width="1.15" fill="none"/></svg><div class="t" style="left:256px;top:616.75px;font-size:12.7px;">009</div>
<div class="t" style="left:336px;top:616.75px;font-size:12.7px;">Dodavatel - školení 4</div>
<div class="t" style="left:513px;top:616.75px;font-size:12.7px;">12345678</div>
<div class="t" style="left:613px;top:616.75px;font-size:12.7px;">10. 6. 2025 19:06</div>
<div class="t" style="left:763px;top:616.75px;font-size:12.7px;">Podána po lhůtě</div>
<svg class="a" style="left:984.6px;top:614.9px" width="12" height="12" viewBox="0 0 12 12"><path d="M2.9 2.9 L9.1 9.1 M9.1 2.9 L2.9 9.1" stroke="#d0282c" stroke-width="2.1" stroke-linecap="round"/></svg>
<svg class="a" style="left:1114.4px;top:614.9px" width="12" height="12" viewBox="0 0 12 12"><path d="M2.9 2.9 L9.1 9.1 M9.1 2.9 L2.9 9.1" stroke="#d0282c" stroke-width="2.1" stroke-linecap="round"/></svg>
<svg class="a" style="left:1294.1px;top:614.9px" width="12" height="12" viewBox="0 0 12 12"><path d="M2.9 2.9 L9.1 9.1 M9.1 2.9 L2.9 9.1" stroke="#d0282c" stroke-width="2.1" stroke-linecap="round"/></svg>
<svg class="a" style="left:192px;top:638px" width="48" height="18" viewBox="192 638 48 18"><g fill="none" stroke="#1f74b4" stroke-width="1.15"><rect x="194.35" y="644.95" width="3.9" height="3.9" rx="1.3"/><rect x="200.05" y="644.95" width="3.9" height="3.9" rx="1.3"/><rect x="205.75" y="644.95" width="3.9" height="3.9" rx="1.3"/><circle cx="228" cy="646.9" r="7.5"/></g><circle cx="227.6" cy="643.7" r="0.75" fill="#1f74b4"/><path d="M226.6 645.9 Q227.7 645.7 227.7 646.9 V648.9 Q227.7 650.3000000000001 229.3 650.5" stroke="#1f74b4" stroke-width="1.15" fill="none"/></svg><div class="t" style="left:256px;top:641.75px;font-size:12.7px;">010</div>
<div class="t" style="left:336px;top:641.75px;font-size:12.7px;">Dodavatel - školení 6</div>
<div class="t" style="left:513px;top:641.75px;font-size:12.7px;">45359326</div>
<div class="t" style="left:613px;top:641.75px;font-size:12.7px;">10. 6. 2025 19:04</div>
<div class="t" style="left:763px;top:641.75px;font-size:12.7px;">Otevření zaevidováno</div>
<svg class="a" style="left:984.6px;top:639.9px" width="12" height="12" viewBox="0 0 12 12"><path d="M2.9 2.9 L9.1 9.1 M9.1 2.9 L2.9 9.1" stroke="#d0282c" stroke-width="2.1" stroke-linecap="round"/></svg>
<svg class="a" style="left:1114.4px;top:639.9px" width="14" height="13" viewBox="0 0 14 13"><path d="M2.6 6.2 L5.5 8.9 L11.2 2.8" fill="none" stroke="#30b830" stroke-width="2.2" stroke-linecap="round" stroke-linejoin="round"/></svg>
<svg class="a" style="left:1294.1px;top:639.9px" width="12" height="12" viewBox="0 0 12 12"><path d="M2.9 2.9 L9.1 9.1 M9.1 2.9 L2.9 9.1" stroke="#d0282c" stroke-width="2.1" stroke-linecap="round"/></svg>
<div class="a" style="left:283.5px;top:116px;width:257px;height:80px;background:#fff;border:1px solid #dadada;border-radius:8px;box-shadow:0 8px 22px rgba(0,0,0,.2),0 2px 4px rgba(0,0,0,.12)"></div>
<div class="a" style="left:282px;top:115px;width:257px;height:42.5px;border:1px solid #e3151f"></div>
<div class="t" style="left:301px;top:134.65px;font-size:12.7px;color:#111;-webkit-text-stroke:0.3px #111">Komunikace s dodavatelem</div>
<div class="t" style="left:301px;top:167.17px;font-size:12.56px;color:#111;-webkit-text-stroke:0.3px #111">Práce s nabídkami</div>
<svg class="a" style="left:506px;top:165px" width="10" height="12" viewBox="0 0 10 12"><path d="M3 2 L7.2 6.2 L3 10.4" fill="none" stroke="#333" stroke-width="1.1"/></svg>
<!-- /P3 -->
</body></html>
